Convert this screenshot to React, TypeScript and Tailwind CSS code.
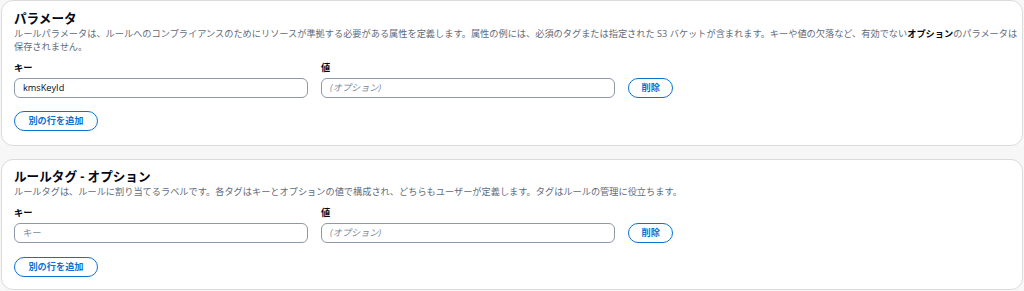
import React from "react";

const FONT = { fontFamily: '"Open Sans","Noto Sans CJK JP","Noto Sans",sans-serif' };

function Row({ keyValue, keyPlaceholder }: { keyValue?: string; keyPlaceholder?: string }) {
  return (
    <div className="flex items-end gap-[13px]">
      <div className="flex w-[294px] flex-col">
        <div className="text-[9.2px] font-bold leading-[13px] text-[#000716]">キー</div>
        <div className="mt-[4px] flex h-[20px] items-center rounded-[6px] border border-[#8d99a8] bg-white px-[8px] text-[9.2px]">
          {keyValue ? (
            <span className="text-[#000716]">{keyValue}</span>
          ) : (
            <span className="text-[#7d8998]">{keyPlaceholder}</span>
          )}
        </div>
      </div>
      <div className="flex w-[294px] flex-col">
        <div className="text-[9.2px] font-bold leading-[13px] text-[#000716]">値</div>
        <div className="mt-[4px] flex h-[20px] items-center rounded-[6px] border border-[#8d99a8] bg-white px-[8px] text-[9.2px]">
          <span className="italic text-[#7d8998]">(オプション)</span>
        </div>
      </div>
      <button className="flex h-[20px] items-center rounded-full border-[1.5px] border-[#0972d3] bg-white px-[12.5px] text-[9.2px] font-bold text-[#0972d3]">
        削除
      </button>
    </div>
  );
}

function AddButton() {
  return (
    <button className="mt-[13.5px] flex h-[20px] w-[84px] items-center justify-center rounded-full border-[1.5px] border-[#0972d3] bg-white text-[9.2px] font-bold text-[#0972d3]">
      別の行を追加
    </button>
  );
}

export default function App() {
  return (
    <div style={FONT} className="flex h-[291px] w-[1024px] flex-col gap-[13px] overflow-hidden bg-[#f7f7f7] px-px">
      <section className="rounded-[12px] border border-[#dadbdd] bg-white px-[12px] pb-[14px] pt-[9px]">
        <h2 className="text-[12.6px] font-bold leading-[17px] text-[#000716]">パラメータ</h2>
        <p className="text-[9.2px] leading-[13px] text-[#5f6b7a]">
          <span className="whitespace-nowrap">
            ルールパラメータは、ルールへのコンプライアンスのためにリソースが準拠する必要がある属性を定義します。属性の例には、必須のタグまたは指定された S3 バケットが含まれます。キーや値の欠落など、有効でない
            <b className="font-bold text-[#000716]">オプション</b>のパラメータは
          </span>
          <br />
          保存されません。
        </p>
        <div className="mt-[7.5px]">
          <Row keyValue="kmsKeyId" />
        </div>
        <AddButton />
      </section>
      <section className="rounded-[12px] border border-[#dadbdd] bg-white px-[12px] pb-[12px] pt-[8px]">
        <h2 className="text-[12.6px] font-bold leading-[17px] text-[#000716]">ルールタグ - オプション</h2>
        <p className="text-[9.2px] leading-[13px] text-[#5f6b7a]">
          ルールタグは、ルールに割り当てるラベルです。各タグはキーとオプションの値で構成され、どちらもユーザーが定義します。タグはルールの管理に役立ちます。
        </p>
        <div className="mt-[8px]">
          <Row keyPlaceholder="キー" />
        </div>
        <AddButton />
      </section>
    </div>
  );
}
